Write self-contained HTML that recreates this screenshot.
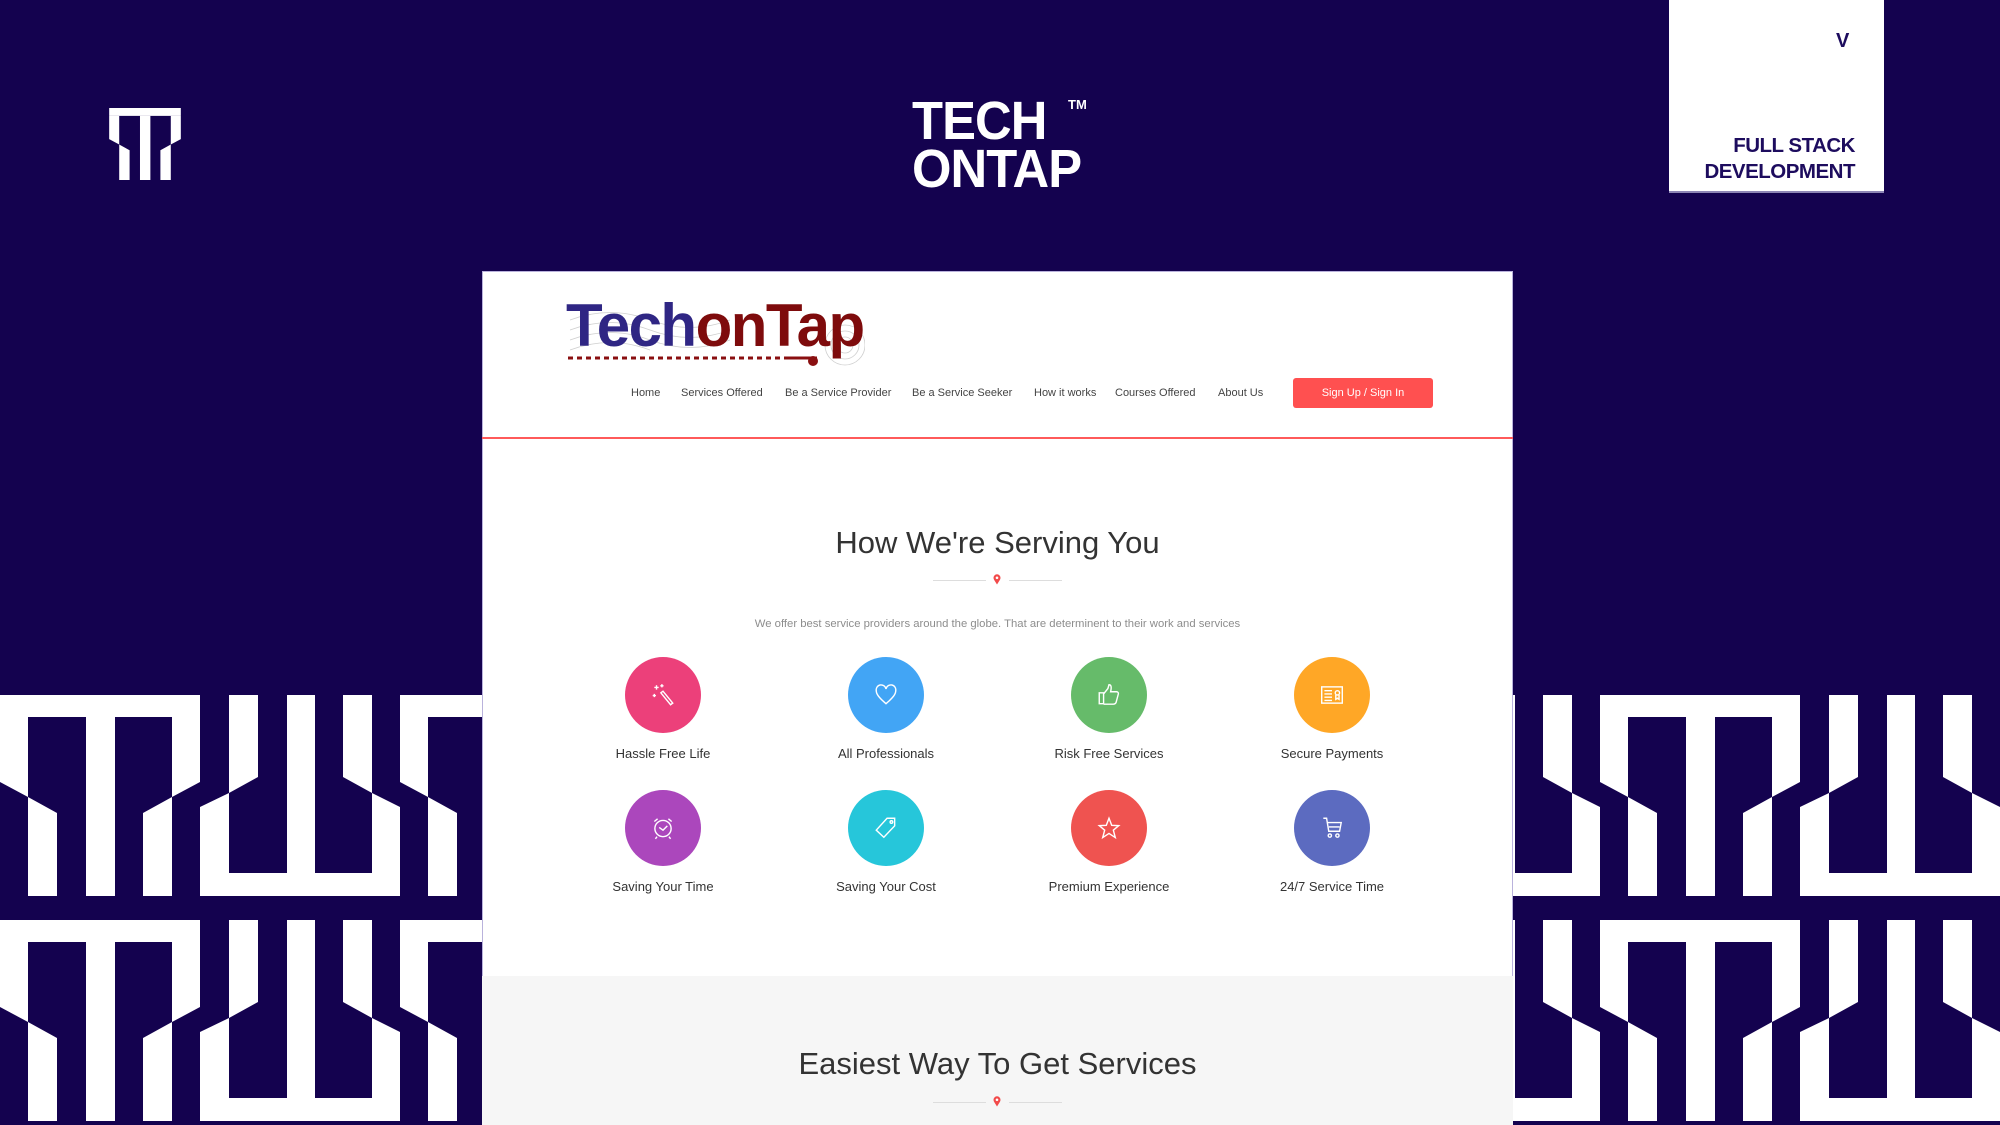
<!DOCTYPE html>
<html><head><meta charset="utf-8">
<style>
*{margin:0;padding:0;box-sizing:border-box}
body{width:2000px;height:1125px;overflow:hidden;background:#14024f;position:relative;font-family:"Liberation Sans",Arial,sans-serif}
.a{position:absolute}
.nav{position:absolute;top:385px;height:16px;line-height:16px;font-size:11px;color:#444;white-space:nowrap}
.circ{position:absolute;width:76px;height:76px;border-radius:50%;display:flex;align-items:center;justify-content:center}
.lbl{position:absolute;width:220px;text-align:center;font-size:13px;color:#333;height:16px;line-height:16px}
.ttl{position:absolute;left:482px;width:1031px;text-align:center;font-size:31px;color:#333;height:32px;line-height:32px}
.div{position:absolute;height:1px;background:#ddd}
</style></head><body>

<svg class="a" style="left:0;top:695px" width="2000" height="430">
<defs>
<g id="T" fill="#fff">
<rect x="0" y="0" width="200" height="22"/>
<polygon points="0,22 28,22 28,102 0,87"/>
<polygon points="28,102 57,118 57,201 28,201"/>
<rect x="86" y="22" width="29" height="179"/>
<polygon points="172,22 200,22 200,87 172,102"/>
<polygon points="143,118 172,102 172,201 143,201"/>
</g>
<g id="U" fill="#fff">
<polygon points="29,0 58,0 58,82 29,98"/>
<polygon points="0,112 29,98 29,178 0,178"/>
<rect x="0" y="178" width="200" height="23"/>
<rect x="87" y="0" width="28" height="178"/>
<polygon points="143,0 172,0 172,98 143,82"/>
<polygon points="172,98 200,112 200,178 172,178"/>
</g>
<pattern id="p" x="0" y="0" width="400" height="225" patternUnits="userSpaceOnUse">
<use href="#T"/><use href="#U" x="200"/>
</pattern>
</defs>
<rect width="2000" height="430" fill="url(#p)"/>
</svg>

<svg class="a" style="left:109px;top:108px" width="72" height="72" viewBox="0 0 200 201"><use href="#T"/></svg>

<div class="a" style="left:912px;top:94px;font-size:54px;font-weight:bold;color:#fff;line-height:54px;transform:scaleX(0.94);transform-origin:0 0;letter-spacing:-1px">TECH</div>
<div class="a" style="left:912px;top:142px;font-size:54px;font-weight:bold;color:#fff;line-height:54px;transform:scaleX(0.94);transform-origin:0 0;letter-spacing:-1px">ONTAP</div>
<div class="a" style="left:1068px;top:98px;font-size:13px;font-weight:bold;color:#fff;line-height:14px">TM</div>

<div class="a" style="left:1669px;top:0;width:215px;height:193px;background:#fff;border-bottom:2px solid #8d86b5"></div>
<div class="a" style="left:1836px;top:31px;font-size:20px;font-weight:bold;color:#1d0c5e;line-height:20px">V</div>
<div class="a" style="right:145px;top:135px;font-size:20.5px;font-weight:bold;color:#1d0c5e;line-height:21px;text-align:right;letter-spacing:-0.5px">FULL STACK</div>
<div class="a" style="right:145px;top:161px;font-size:20.5px;font-weight:bold;color:#1d0c5e;line-height:21px;text-align:right;letter-spacing:-0.5px">DEVELOPMENT</div>

<div class="a" style="left:482px;top:271px;width:1031px;height:854px;background:#fff;border:1px solid #b9b2dc;border-bottom:none"></div>
<div class="a" style="left:482px;top:976px;width:1031px;height:149px;background:#f6f6f6"></div>
<div class="a" style="left:482px;top:437px;width:1031px;height:2px;background:#ff5a5a"></div>

<svg class="a" style="left:565px;top:300px" width="300" height="72">
<g stroke="#bbb" fill="none" stroke-width="0.8" opacity="0.7">
<path d="M5 20 q40 -15 80 0 t80 0"/><path d="M5 30 q40 -15 80 0 t80 0"/><path d="M5 40 q40 -15 80 0 t80 0"/><path d="M5 50 q40 -15 80 0"/>
<circle cx="280" cy="45" r="8"/><circle cx="280" cy="45" r="14"/><circle cx="280" cy="45" r="20"/>
</g>
<line x1="3" y1="58" x2="222" y2="58" stroke="#8a0f10" stroke-width="3" stroke-dasharray="5 4"/>
<line x1="222" y1="58" x2="252" y2="58" stroke="#8a0f10" stroke-width="3"/>
<circle cx="248" cy="61" r="5" fill="#8a0f10"/>
</svg>
<div class="a" style="left:566px;top:296px;font-size:60px;font-weight:bold;line-height:60px;letter-spacing:-1.5px;white-space:nowrap"><span style="color:#2f2684">Tech</span><span style="color:#7e0b0c">onTap</span></div>

<div class="nav" style="left:631px">Home</div>
<div class="nav" style="left:681px">Services Offered</div>
<div class="nav" style="left:785px">Be a Service Provider</div>
<div class="nav" style="left:912px">Be a Service Seeker</div>
<div class="nav" style="left:1034px">How it works</div>
<div class="nav" style="left:1115px">Courses Offered</div>
<div class="nav" style="left:1218px">About Us</div>
<div class="a" style="left:1293px;top:378px;width:140px;height:30px;background:#ff5050;border-radius:3px;color:#fff;font-size:11px;line-height:30px;text-align:center">Sign Up / Sign In</div>

<div class="ttl" style="top:527px">How We're Serving You</div>
<div class="div" style="left:933px;top:580px;width:53px"></div>
<div class="div" style="left:1009px;top:580px;width:53px"></div>
<svg class="a" style="left:993px;top:574px" width="8" height="11"><path d="M4 10.5 C1 6 0.5 5 0.5 3.8 A3.5 3.5 0 0 1 7.5 3.8 C7.5 5 7 6 4 10.5Z" fill="#f24a4a"/><circle cx="4" cy="3.8" r="1.3" fill="#fff"/></svg>
<div class="a" style="left:482px;width:1031px;top:617px;height:14px;line-height:14px;text-align:center;font-size:11.3px;color:#8d8d8d">We offer best service providers around the globe. That are determinent to their work and services</div>

<div class="circ" style="left:625px;top:657px;background:#ec407a"><svg width="26" height="26" viewBox="0 0 24 24" fill="none" stroke="#fff" stroke-width="1.3"><path d="M10 10 L19 21 L21 19.5 L12 8.5 Z"/><path d="M6 3v4M4 5h4M4 11v3M2.5 12.5h3M11 2v3M9.5 3.5h3"/></svg></div>
<div class="circ" style="left:848px;top:657px;background:#42a5f5"><svg width="26" height="26" viewBox="0 0 24 24" fill="none" stroke="#fff" stroke-width="1.3"><path d="M12 20 C5 14 3 11 3 8 A4.5 4.5 0 0 1 12 6.5 A4.5 4.5 0 0 1 21 8 C21 11 19 14 12 20Z"/></svg></div>
<div class="circ" style="left:1071px;top:657px;background:#66bb6a"><svg width="26" height="26" viewBox="0 0 24 24" fill="none" stroke="#fff" stroke-width="1.3"><path d="M3 10h4v10H3zM7 11 L11 6 L12 2.5 C14 2.5 14.5 4.5 13.5 9 H19 C20.5 9 21 10.5 20.5 11.5 L18.5 19 C18 20 17 20.5 16 20.5 H7"/></svg></div>
<div class="circ" style="left:1294px;top:657px;background:#ffa726"><svg width="26" height="26" viewBox="0 0 24 24" fill="none" stroke="#fff" stroke-width="1.3"><rect x="2.5" y="4.5" width="19" height="15"/><path d="M5 8h7M5 11h7M5 14h7M5 17h7"/><circle cx="17" cy="10" r="2"/><path d="M15.5 12v4l1.5-1 1.5 1v-4"/></svg></div>
<div class="lbl" style="left:553px;top:746px">Hassle Free Life</div>
<div class="lbl" style="left:776px;top:746px">All Professionals</div>
<div class="lbl" style="left:999px;top:746px">Risk Free Services</div>
<div class="lbl" style="left:1222px;top:746px">Secure Payments</div>

<div class="circ" style="left:625px;top:790px;background:#ab47bc"><svg width="26" height="26" viewBox="0 0 24 24" fill="none" stroke="#fff" stroke-width="1.3"><circle cx="12" cy="12.5" r="7.5"/><path d="M8.5 11.5 L12 14 L16 10"/><path d="M4 6 L7 3.5M20 6 L17 3.5M6.5 20 L5 22M17.5 20 L19 22"/></svg></div>
<div class="circ" style="left:848px;top:790px;background:#26c6da"><svg width="26" height="26" viewBox="0 0 24 24" fill="none" stroke="#fff" stroke-width="1.3"><path d="M13 3 H20 V10 L10 20.5 L3 14 Z"/><circle cx="17" cy="6.5" r="1.2"/></svg></div>
<div class="circ" style="left:1071px;top:790px;background:#ef5350"><svg width="26" height="26" viewBox="0 0 24 24" fill="none" stroke="#fff" stroke-width="1.3"><path d="M12 3 L14.5 9.5 L21 9.8 L16 14 L17.8 20.8 L12 17 L6.2 20.8 L8 14 L3 9.8 L9.5 9.5 Z"/></svg></div>
<div class="circ" style="left:1294px;top:790px;background:#5c6bc0"><svg width="26" height="26" viewBox="0 0 24 24" fill="none" stroke="#fff" stroke-width="1.3"><path d="M4 3h3l2 12h10l1.5-8H8"/><path d="M9 11h10"/><circle cx="10" cy="19" r="1.5"/><circle cx="17" cy="19" r="1.5"/></svg></div>
<div class="lbl" style="left:553px;top:879px">Saving Your Time</div>
<div class="lbl" style="left:776px;top:879px">Saving Your Cost</div>
<div class="lbl" style="left:999px;top:879px">Premium Experience</div>
<div class="lbl" style="left:1222px;top:879px">24/7 Service Time</div>

<div class="ttl" style="top:1048px">Easiest Way To Get Services</div>
<div class="div" style="left:933px;top:1102px;width:53px"></div>
<div class="div" style="left:1009px;top:1102px;width:53px"></div>
<svg class="a" style="left:993px;top:1096px" width="8" height="11"><path d="M4 10.5 C1 6 0.5 5 0.5 3.8 A3.5 3.5 0 0 1 7.5 3.8 C7.5 5 7 6 4 10.5Z" fill="#f24a4a"/><circle cx="4" cy="3.8" r="1.3" fill="#fff"/></svg>

</body></html>
